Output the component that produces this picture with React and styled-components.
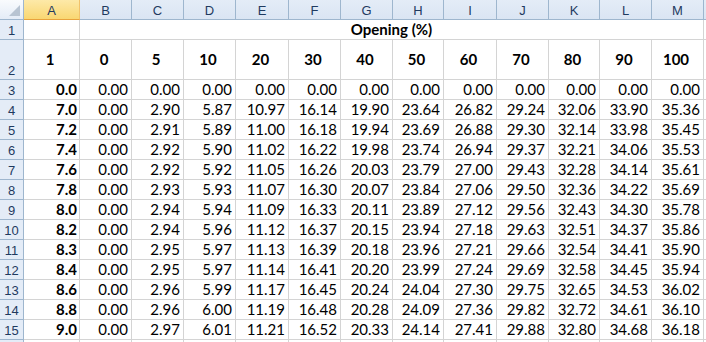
import React from 'react';
import styled, { createGlobalStyle } from 'styled-components';

const COLUMNS = ['A', 'B', 'C', 'D', 'E', 'F', 'G', 'H', 'I', 'J', 'K', 'L', 'M'];
const OPENINGS = ['1', '0', '5', '10', '20', '30', '40', '50', '60', '70', '80', '90', '100'];

const ROWS = [
  ['0.0', '0.00', '0.00', '0.00', '0.00', '0.00', '0.00', '0.00', '0.00', '0.00', '0.00', '0.00', '0.00'],
  ['7.0', '0.00', '2.90', '5.87', '10.97', '16.14', '19.90', '23.64', '26.82', '29.24', '32.06', '33.90', '35.36'],
  ['7.2', '0.00', '2.91', '5.89', '11.00', '16.18', '19.94', '23.69', '26.88', '29.30', '32.14', '33.98', '35.45'],
  ['7.4', '0.00', '2.92', '5.90', '11.02', '16.22', '19.98', '23.74', '26.94', '29.37', '32.21', '34.06', '35.53'],
  ['7.6', '0.00', '2.92', '5.92', '11.05', '16.26', '20.03', '23.79', '27.00', '29.43', '32.28', '34.14', '35.61'],
  ['7.8', '0.00', '2.93', '5.93', '11.07', '16.30', '20.07', '23.84', '27.06', '29.50', '32.36', '34.22', '35.69'],
  ['8.0', '0.00', '2.94', '5.94', '11.09', '16.33', '20.11', '23.89', '27.12', '29.56', '32.43', '34.30', '35.78'],
  ['8.2', '0.00', '2.94', '5.96', '11.12', '16.37', '20.15', '23.94', '27.18', '29.63', '32.51', '34.37', '35.86'],
  ['8.3', '0.00', '2.95', '5.97', '11.13', '16.39', '20.18', '23.96', '27.21', '29.66', '32.54', '34.41', '35.90'],
  ['8.4', '0.00', '2.95', '5.97', '11.14', '16.41', '20.20', '23.99', '27.24', '29.69', '32.58', '34.45', '35.94'],
  ['8.6', '0.00', '2.96', '5.99', '11.17', '16.45', '20.24', '24.04', '27.30', '29.75', '32.65', '34.53', '36.02'],
  ['8.8', '0.00', '2.96', '6.00', '11.19', '16.48', '20.28', '24.09', '27.36', '29.82', '32.72', '34.61', '36.10'],
  ['9.0', '0.00', '2.97', '6.01', '11.21', '16.52', '20.33', '24.14', '27.41', '29.88', '32.80', '34.68', '36.18'],
];

const GlobalStyle = createGlobalStyle`
  html, body {
    margin: 0;
    padding: 0;
    background: #ffffff;
    overflow: hidden;
  }
  body {
    font-family: Lato, "Open Sans", sans-serif;
  }
`;

const Sheet = styled.div`
  display: grid;
  grid-template-columns: 24px 56px 52px 52px 52px 53px 52px 52px 51px 53px 52px 51px 52px 52px 60px;
  grid-template-rows: 20px 20px 40px repeat(13, 20px) 20px;
  width: 706px;
  height: 342px;
  overflow: hidden;
  font-size: 15px;
  color: #000;
`;

const Corner = styled.div`
  position: relative;
  box-sizing: border-box;
  background: linear-gradient(#f9fbfd, #e4ecf7);
  border-right: 1px solid #9eb6ce;
  border-bottom: 1px solid #9eb6ce;
  &::after {
    content: '';
    position: absolute;
    right: 3px;
    bottom: 3px;
    border-style: solid;
    border-width: 0 0 11px 11px;
    border-color: transparent transparent #b8c4d2 transparent;
  }
`;

const ColHead = styled.div`
  box-sizing: border-box;
  display: flex;
  align-items: center;
  justify-content: center;
  font-family: "Liberation Sans", Arial, sans-serif;
  font-size: 13px;
  padding-top: 1px;
  color: #1f3a5f;
  background: ${(p) =>
    p.$selected ? 'linear-gradient(#fde9a8, #f9d772)' : 'linear-gradient(#e4ecf7, #dae5f3)'};
  border-right: 1px solid ${(p) => (p.$selected ? '#f2c26a' : '#9eb6ce')};
  border-bottom: 1px solid ${(p) => (p.$selected ? '#e8a33d' : '#9eb6ce')};
`;

const RowHead = styled.div`
  box-sizing: border-box;
  display: flex;
  align-items: flex-end;
  justify-content: center;
  padding-bottom: 1px;
  font-family: "Liberation Sans", Arial, sans-serif;
  font-size: 13px;
  color: #1f3a5f;
  background: #e4ecf7;
  border-right: 1px solid #9eb6ce;
  border-bottom: 1px solid #9eb6ce;
`;

const Cell = styled.div`
  box-sizing: border-box;
  display: flex;
  align-items: ${(p) => (p.$middle ? 'center' : 'flex-end')};
  justify-content: ${(p) => (p.$center ? 'center' : 'flex-end')};
  padding: 0 ${(p) => (p.$tight ? 2 : 3)}px 0 0;
  line-height: 19px;
  font-weight: ${(p) => (p.$bold ? 700 : 400)};
  white-space: nowrap;
  border-right: 1px solid #d4d4d4;
  border-bottom: 1px solid #d4d4d4;
`;

const Merged = styled(Cell)`
  grid-column: 3 / 15;
  justify-content: center;
  padding: 0;
`;

export default function App() {
  return (
    <>
      <GlobalStyle />
      <Sheet>
        <Corner />
        {COLUMNS.map((c) => (
          <ColHead key={c} $selected={c === 'A'}>
            {c}
          </ColHead>
        ))}
        <ColHead />

        <RowHead>1</RowHead>
        <Cell />
        <Merged $bold>Opening (%)</Merged>
        <Cell />

        <RowHead>2</RowHead>
        {OPENINGS.map((o, i) => (
          <Cell key={i} $bold $center $middle>
            {o}
          </Cell>
        ))}
        <Cell />

        {ROWS.map((row, r) => (
          <React.Fragment key={r}>
            <RowHead>{r + 3}</RowHead>
            {row.map((v, i) => (
              <Cell key={i} $bold={i === 0} $tight={i === 0}>
                {v}
              </Cell>
            ))}
            <Cell />
          </React.Fragment>
        ))}

        <RowHead />
        {COLUMNS.map((c) => (
          <Cell key={c} />
        ))}
        <Cell />
      </Sheet>
    </>
  );
}
